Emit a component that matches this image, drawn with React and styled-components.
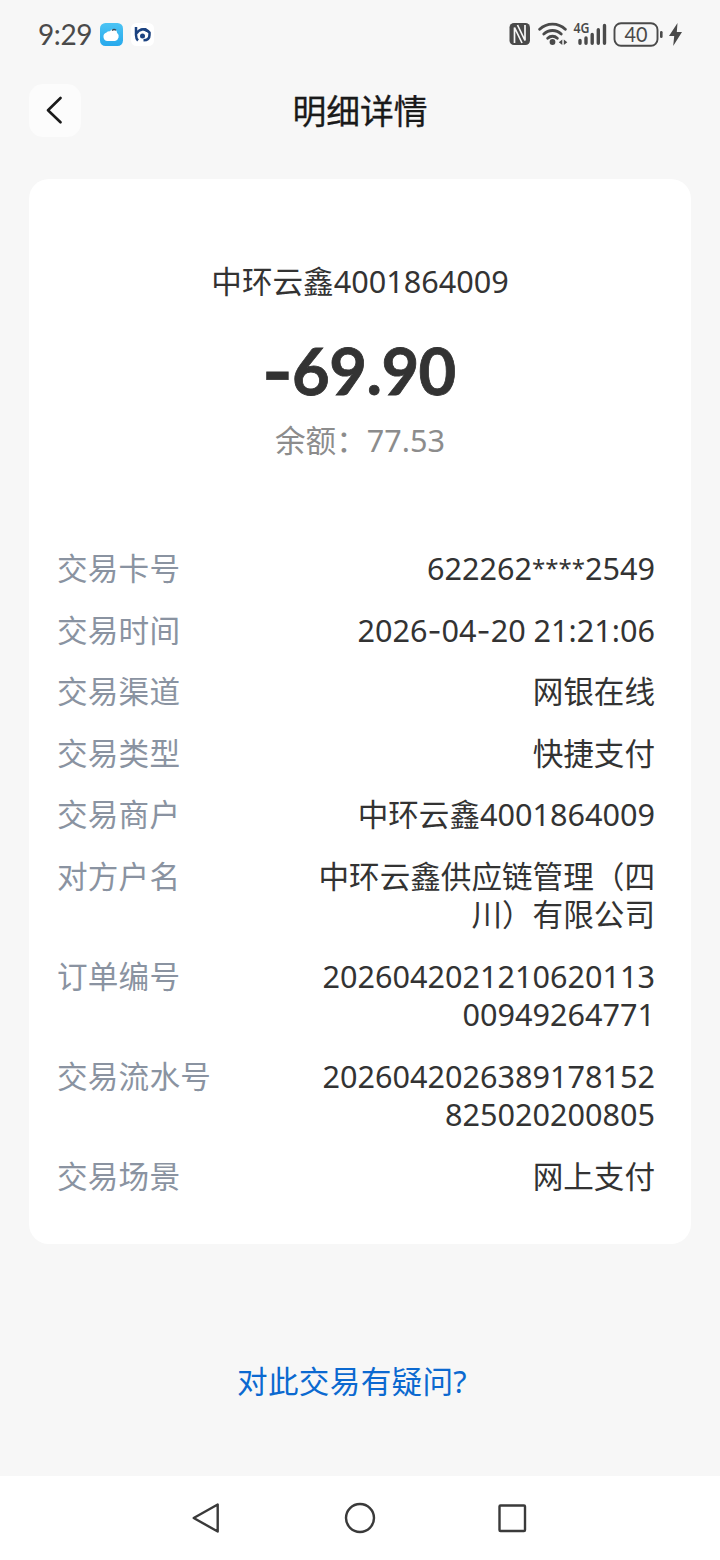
import React from 'react';
import styled, { createGlobalStyle } from 'styled-components';

const colors = {
  page: '#f7f7f7',
  card: '#ffffff',
  text: '#333333',
  title: '#1a1a1a',
  label: '#8a93a1',
  muted: '#8c8c8c',
  link: '#0b69d0',
  status: '#4a4a4a',
};

const GlobalStyle = createGlobalStyle`
  * {
    box-sizing: border-box;
  }

  body {
    margin: 0;
    background: ${colors.page};
    font-family: 'Noto Sans', 'Noto Sans CJK SC', sans-serif;
  }
`;

const Screen = styled.div`
  display: flex;
  flex-direction: column;
  width: 720px;
  height: 1560px;
  background: ${colors.page};
  overflow: hidden;
`;

const StatusBar = styled.div`
  display: flex;
  align-items: center;
  justify-content: space-between;
  height: 68px;
  padding: 0 38px;
`;

const StatusGroup = styled.div`
  display: flex;
  align-items: center;
  gap: ${(props) => props.$gap}px;
`;

const Clock = styled.span`
  width: 54px;
  font-family: 'Lato', 'Noto Sans', sans-serif;
  font-size: 28px;
  line-height: 32px;
  letter-spacing: -0.4px;
  color: ${colors.status};
`;

const Header = styled.header`
  display: grid;
  grid-template-columns: 52px 1fr 52px;
  align-items: center;
  height: 84px;
  padding: 0 29px;
`;

const BackButton = styled.button`
  display: flex;
  align-items: center;
  justify-content: center;
  width: 52px;
  height: 53px;
  padding: 0 3px 0 0;
  border: none;
  border-radius: 14px;
  background: #fcfcfc;
`;

const Title = styled.h1`
  margin: 0;
  padding-top: 1px;
  font-size: 33.8px;
  font-weight: 400;
  line-height: 48px;
  text-align: center;
  color: ${colors.title};
  -webkit-text-stroke: 0.3px ${colors.title};
`;

const Card = styled.main`
  height: 1065px;
  margin: 27px 29px 0;
  padding: 80px 36px 0 28px;
  border-radius: 20px;
  background: ${colors.card};
`;

const Summary = styled.section`
  display: flex;
  flex-direction: column;
  align-items: center;
  height: 290px;
  padding-left: 8px;
`;

const Payee = styled.div`
  font-size: 30.6px;
  line-height: 44px;
  color: ${colors.text};
`;

const Amount = styled.div`
  margin-top: 27px;
  padding-right: 2px;
  font-family: 'Lato', 'Noto Sans', sans-serif;
  font-size: 65px;
  font-weight: 700;
  line-height: 80px;
  letter-spacing: -0.5px;
  color: ${colors.text};
  -webkit-text-stroke: 0.8px ${colors.text};
`;

const Balance = styled.div`
  margin-top: 8px;
  font-size: 30.6px;
  line-height: 44px;
  color: ${colors.muted};
`;

const DetailList = styled.dl`
  display: flex;
  flex-direction: column;
  gap: 23px;
  margin: 0;
`;

const DetailRow = styled.div`
  display: flex;
  justify-content: space-between;
  font-size: 30.6px;
  line-height: 38.5px;
`;

const Label = styled.dt`
  letter-spacing: 0.2px;
  color: ${colors.label};
`;

const Value = styled.dd`
  width: 340px;
  margin: 0;
  text-align: right;
  word-break: break-all;
  color: ${colors.text};
`;

const Stars = styled.span`
  font-size: 24px;
  line-height: 1;
  vertical-align: 3px;
`;

// Inter has a wider hyphen than the text face
const Dash = styled.span`
  font-family: 'Inter', sans-serif;
  line-height: 1;
`;

const Help = styled.a`
  display: block;
  width: 704px;
  margin-top: 115px;
  font-size: 30.6px;
  line-height: 44px;
  letter-spacing: 0.3px;
  text-align: center;
  color: ${colors.link};
`;

const NavBar = styled.nav`
  display: flex;
  align-items: center;
  justify-content: center;
  gap: 120px;
  height: 84px;
  margin-top: auto;
  background: #ffffff;
`;

const details = [
  { label: '交易卡号', value: <>622262<Stars>****</Stars>2549</> },
  { label: '交易时间', value: <>2026<Dash>-</Dash>04<Dash>-</Dash>20 21:21:06</> },
  { label: '交易渠道', value: '网银在线' },
  { label: '交易类型', value: '快捷支付' },
  { label: '交易商户', value: '中环云鑫4001864009' },
  { label: '对方户名', value: '中环云鑫供应链管理（四川）有限公司' },
  { label: '订单编号', value: '202604202121062011300949264771' },
  { label: '交易流水号', value: '2026042026389178152825020200805' },
  { label: '交易场景', value: '网上支付' },
];

const CloudAppIcon = () => (
  <svg width="23" height="23" viewBox="0 0 23 23">
    <defs>
      <linearGradient id="cloudBg" x1="0" y1="0" x2="0" y2="1">
        <stop offset="0" stopColor="#4cc4f4" />
        <stop offset="1" stopColor="#27a9ec" />
      </linearGradient>
    </defs>
    <rect width="23" height="23" rx="5.5" fill="url(#cloudBg)" />
    <path d="M7.500 18a4.300 4.300 0 0 1-1-8.400A3.500 3.500 0 0 1 10 8.300a3.700 3.700 0 0 1 7 1.500 4.700 4.700 0 0 1-2 8.200z" fill="#fff" />
    <path d="M12 7.500q2-1.800 4-.2" fill="none" stroke="#3a4a55" strokeWidth="1.300" />
  </svg>
);

const BankAppIcon = () => (
  <svg width="23" height="23" viewBox="0 0 23 23">
    <rect width="23" height="23" rx="5.500" fill="#fff" />
    <g fill="none" stroke="#1b4280" strokeWidth="2.500">
      <path d="M5 4v8c0 2.500.5 4 2 5.500" />
      <path d="M5.500 10.500C8 6 14 4.500 18.500 9.500v2.500c0 3.500-2.500 5.300-6 5.300" />
    </g>
    <path d="M9 5.500l6-.5 4.500 5.500-5-2z" fill="#1b4280" />
    <circle cx="11.500" cy="13" r="2.500" fill="#1b4280" />
  </svg>
);

const NfcIcon = () => (
  <svg width="23" height="22" viewBox="0 0 23 22">
    <rect x="0.500" width="20.500" height="22" rx="4.500" fill={colors.status} />
    <g fill="none" stroke={colors.page} strokeWidth="1.700">
      <path d="M5.500 20V4.500L13 20" />
      <path d="M16 2v15.500L8.500 2" />
    </g>
  </svg>
);

const WifiIcon = () => (
  <svg width="30" height="24" viewBox="0 0 30 24">
    <g fill="none" stroke={colors.status} strokeWidth="2.900" strokeLinecap="round">
      <path d="M1.700 7.300a18.500 18.500 0 0 1 25.600 0" />
      <path d="M5.800 12a12.500 12.500 0 0 1 17.400 0" />
      <path d="M9.700 16.200a7 7 0 0 1 9.600 0" />
    </g>
    <circle cx="14.500" cy="20" r="2.900" fill={colors.status} />
    <path d="M24.300 17.500v5.500l-3.500-2.800zM25.800 17.500v5.500l3.500-2.800z" fill={colors.status} />
  </svg>
);

const SignalIcon = () => (
  <svg width="34" height="36" viewBox="0 -4 34 36">
    <text x="0.500" y="13" fontSize="14.500" fontWeight="600" textLength="16" lengthAdjust="spacingAndGlyphs" fill={colors.status}>4G</text>
    <g stroke={colors.status} strokeWidth="3.400" strokeLinecap="round">
      <path d="M7 20.500v2.700M13 18v5.200M19.200 14.500v8.700M25.300 9.800v13.400M31.500 5.500v17.700" />
    </g>
  </svg>
);

const BatteryIcon = () => (
  <svg width="50" height="25" viewBox="0 0 50 25">
    <rect x="1.500" y="1.200" width="43" height="22.600" rx="6.500" fill="none" stroke={colors.status} strokeWidth="1.900" />
    <rect x="47" y="9" width="2.600" height="7" rx="1.300" fill={colors.status} />
    <text x="11.500" y="20" fontSize="21" fontFamily="Lato" textLength="23" lengthAdjust="spacingAndGlyphs" fill={colors.status}>40</text>
  </svg>
);

const BoltIcon = () => (
  <svg width="13" height="23" viewBox="0 0 13 23">
    <path d="M8.500 0L0 13h5.200L4.200 23 13 9H7.800z" fill={colors.status} />
  </svg>
);

const App = () => {
  return (
    <>
      <GlobalStyle />
      <Screen>
        <StatusBar>
          <StatusGroup $gap={8}>
            <Clock>9:29</Clock>
            <CloudAppIcon />
            <BankAppIcon />
          </StatusGroup>
          <StatusGroup $gap={5.8}>
            <NfcIcon />
            <WifiIcon />
            <SignalIcon />
            <BatteryIcon />
            <BoltIcon />
          </StatusGroup>
        </StatusBar>

        <Header>
          <BackButton aria-label="返回">
            <svg width="18" height="28" viewBox="0 0 18 28" fill="none" stroke="#1a1a1a" strokeWidth="2.600" strokeLinecap="round" strokeLinejoin="round">
              <path d="M15.500 2L3 14.200 15.500 26.300" />
            </svg>
          </BackButton>
          <Title>明细详情</Title>
        </Header>

        <Card>
          <Summary>
            <Payee>中环云鑫4001864009</Payee>
            <Amount><Dash>-</Dash>69.90</Amount>
            <Balance>余额：77.53</Balance>
          </Summary>
          <DetailList>
            {details.map((item) => (
              <DetailRow key={item.label}>
                <Label>{item.label}</Label>
                <Value>{item.value}</Value>
              </DetailRow>
            ))}
          </DetailList>
        </Card>

        <Help>对此交易有疑问?</Help>

        <NavBar>
          <svg width="32" height="32" viewBox="0 0 32 32" fill="none" stroke="#3a3a3a" strokeWidth="2.400" strokeLinejoin="round">
            <path d="M25.700 2.500v27L1.700 16z" />
          </svg>
          <svg width="32" height="32" viewBox="0 0 32 32" fill="none" stroke="#3a3a3a" strokeWidth="2.400">
            <circle cx="16" cy="16" r="14" />
          </svg>
          <svg width="32" height="32" viewBox="0 0 32 32" fill="none" stroke="#3a3a3a" strokeWidth="2.400">
            <rect x="3.500" y="3.500" width="25.500" height="25.500" rx="1" />
          </svg>
        </NavBar>
      </Screen>
    </>
  );
};

export default App;
